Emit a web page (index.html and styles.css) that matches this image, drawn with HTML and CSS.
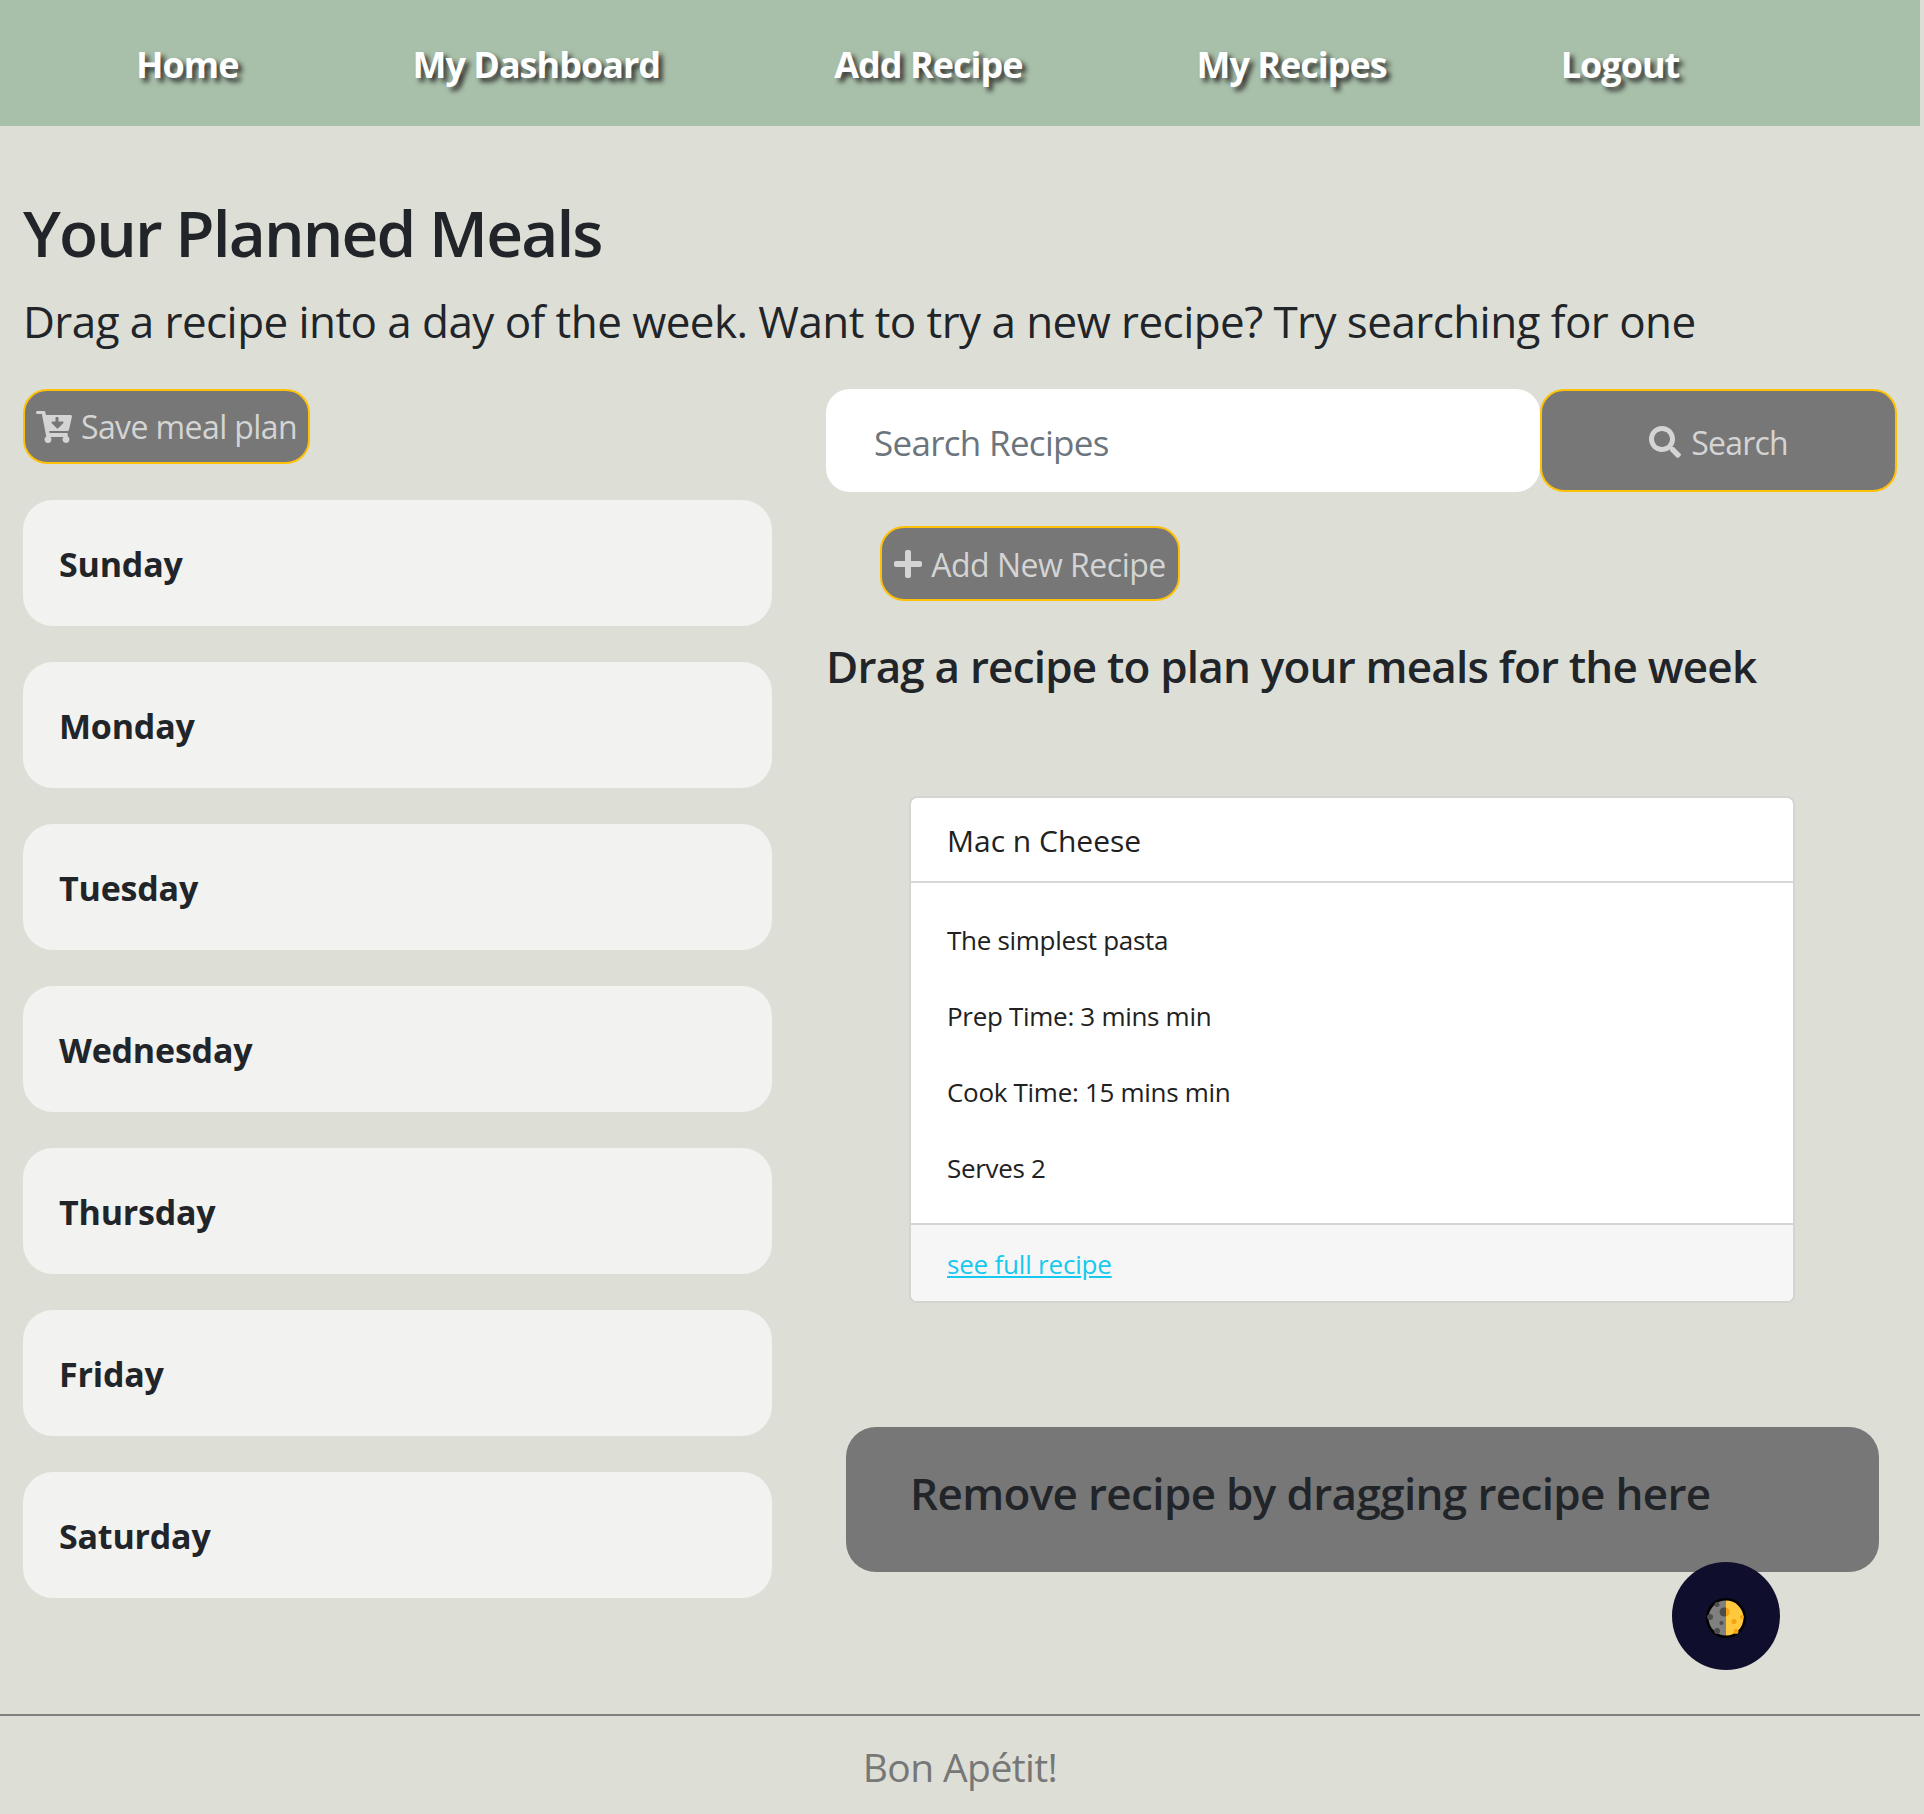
FILE: index.html
```html
<!DOCTYPE html>
<html>
<head>
	<title>Meal Planner</title>
	<link rel="stylesheet" href="styles.css">
</head>
<body>
	<nav class="topnav">
		<a href="#">Home</a>
		<a href="#">My Dashboard</a>
		<a href="#">Add Recipe</a>
		<a href="#">My Recipes</a>
		<a href="#">Logout</a>
	</nav>
	<main class="page">
		<h1 class="page-title">Your Planned Meals</h1>
		<p class="lead">Drag a recipe into a day of the week. Want to try a new recipe? Try searching for one</p>
		<div class="planner">
			<section class="week">
				<button type="button" class="btn btn-save">
					<svg class="icon icon-cart" viewBox="0 0 576 512"><path fill="currentColor" d="M504.7 320H211.3l6.5 32h268.4c15.4 0 26.8 14.3 23.4 29.3l-5.5 24.3c18.7 9.1 31.6 28.2 31.6 50.4 0 31.2-25.5 56.4-56.8 56-29.8-.4-54.4-24.6-55.2-54.4-.4-16.3 6.1-31 16.8-41.6H231.2c10.4 10.2 16.8 24.3 16.8 40 0 31.8-26.5 57.4-58.7 56-28.6-1.2-51.8-24.3-53.3-52.9-1.2-22.1 10.4-41.5 28-51.6L94 48H24C10.7 48 0 37.300 0 24S10.700 0 24 0h102.500c11.400 0 21.200 8 23.500 19.200L159.200 64H552c15.400 0 26.800 14.300 23.400 29.300l-47.300 208c-2.500 10.900-12.200 18.700-23.400 18.700zM408 168h-48v-56c0-8.800-7.200-16-16-16h-16c-8.800 0-16 7.200-16 16v56h-48c-14.300 0-21.400 17.200-11.300 27.300l80 80c6.200 6.200 16.400 6.200 22.600 0l80-80c10.100-10.100 3-27.300-11.300-27.300z"/></svg>
					Save meal plan
				</button>
				<div class="day">Sunday</div>
				<div class="day">Monday</div>
				<div class="day">Tuesday</div>
				<div class="day">Wednesday</div>
				<div class="day">Thursday</div>
				<div class="day">Friday</div>
				<div class="day">Saturday</div>
			</section>
			<section class="recipes">
				<form class="search">
					<input type="text" class="search-input" placeholder="Search Recipes">
					<button type="button" class="btn btn-search">
						<svg class="icon icon-search" viewBox="0 0 512 512"><path fill="currentColor" d="M505 442.700L405.300 343c-4.500-4.500-10.600-7-17-7H372c27.600-35.300 44-79.700 44-128C416 93.100 322.900 0 208 0S0 93.100 0 208s93.100 208 208 208c48.300 0 92.700-16.400 128-44v16.300c0 6.400 2.500 12.500 7 17l99.700 99.700c9.400 9.400 24.600 9.400 33.900 0l28.300-28.300c9.400-9.400 9.400-24.600.1-34zM208 336c-70.700 0-128-57.200-128-128 0-70.700 57.200-128 128-128 70.700 0 128 57.200 128 128 0 70.700-57.200 128-128 128z"/></svg>
						Search
					</button>
				</form>
				<button type="button" class="btn btn-add">
					<svg class="icon icon-plus" viewBox="0 0 448 512"><path fill="currentColor" d="M416 208H272V64c0-17.670-14.330-32-32-32h-32c-17.670 0-32 14.330-32 32v144H32c-17.670 0-32 14.330-32 32v32c0 17.670 14.330 32 32 32h144v144c0 17.670 14.330 32 32 32h32c17.670 0 32-14.330 32-32V304h144c17.670 0 32-14.330 32-32v-32c0-17.670-14.330-32-32-32z"/></svg>
					Add New Recipe
				</button>
				<h2 class="recipes-title">Drag a recipe to plan your meals for the week</h2>
				<div class="card">
					<div class="card-header">Mac n Cheese</div>
					<div class="card-body">
						<p>The simplest pasta</p>
						<p>Prep Time: 3 mins min</p>
						<p>Cook Time: 15 mins min</p>
						<p>Serves 2</p>
					</div>
					<div class="card-footer"><a href="#">see full recipe</a></div>
				</div>
				<div class="trash">Remove recipe by dragging recipe here</div>
			</section>
		</div>
		<button type="button" class="theme-toggle" aria-label="Toggle theme">
			<svg viewBox="0 0 40 40" width="40" height="40">
				<circle cx="20" cy="20" r="20" fill="#000"/>
				<path d="M20 2.500a17.500 17.500 0 0 0 0 35z" fill="#808080"/>
				<path d="M20 2.500a17.500 17.500 0 0 1 0 35z" fill="#ffc83d"/>
				<circle cx="18" cy="14" r="4.500" fill="#4d4d4d"/>
				<path d="M20 9.600a4.500 4.500 0 0 1 0 8.800z" fill="#f2a30f"/>
				<circle cx="11" cy="6.500" r="2.500" fill="#4d4d4d"/>
				<circle cx="4" cy="19" r="3" fill="#4d4d4d"/>
				<circle cx="15.500" cy="25" r="2" fill="#4d4d4d"/>
				<circle cx="11" cy="33" r="3" fill="#4d4d4d"/>
				<circle cx="28" cy="23.500" r="2.500" fill="#f2a30f"/>
				<circle cx="36" cy="19" r="2" fill="#f2a30f"/>
				<circle cx="30" cy="33.500" r="2.500" fill="#f2a30f"/>
			</svg>
		</button>
	</main>
	<footer class="footer">Bon Apétit!</footer>
</body>
</html>
```

FILE: styles.css
```css
html{
	background-color: #dddfd7;
}
body{
	margin: 0;
	width: 1920px;
	font-family: "Open Sans", "Noto Sans", sans-serif;
	color: #212529;
	background-color: #dddfd7;
}
.topnav{
	height: 126px;
	background-color: #a8c0a9;
	display: flex;
	align-items: center;
	gap: 174px;
	padding: 3px 0 0 136px;
	box-sizing: border-box;
}
.topnav a{
	color: white;
	font-size: 36px;
	font-weight: 700;
	letter-spacing: -1px;
	text-decoration: none;
	text-shadow: 4px 4px 5px #333;
}
.page{
	position: relative;
	padding: 69px 23px 0;
	height: 1588px;
	box-sizing: border-box;
}
.page-title{
	margin: 0;
	font-size: 64px;
	font-weight: 550;
	line-height: 76px;
	letter-spacing: -1.9px;
}
.lead{
	margin: 20px 0 0;
	font-size: 44px;
	font-weight: 400;
	line-height: 60px;
	letter-spacing: -0.57px;
}
.planner{
	display: flex;
	gap: 54px;
	margin-top: 38px;
}
.week{
	width: 749px;
	flex: none;
	display: flex;
	flex-direction: column;
	align-items: flex-start;
	gap: 36px;
}
.day{
	width: 100%;
	height: 126px;
	box-sizing: border-box;
	padding: 42px 36px 0;
	border-radius: 30px;
	background-color: #f2f2f0;
	font-size: 34px;
	font-weight: 700;
	line-height: 44px;
	letter-spacing: -0.2px;
}
.btn{
	display: flex;
	align-items: center;
	justify-content: center;
	box-sizing: border-box;
	background-color: #777;
	border: 2px solid #ffc107;
	border-radius: 24px;
	color: #d4d4d4;
	font-family: inherit;
	font-size: 32px;
	font-weight: 400;
	letter-spacing: -0.6px;
}
.icon{
	flex: none;
}
.btn-save{
	width: 287px;
	height: 75px;
	gap: 9px;
}
.icon-cart{
	width: 36px;
	height: 32px;
}
.recipes{
	flex: 1;
	display: flex;
	flex-direction: column;
	align-items: flex-start;
}
.search{
	display: flex;
	width: 1071px;
	height: 103px;
}
.search-input{
	width: 714px;
	box-sizing: border-box;
	border: none;
	outline: none;
	border-radius: 24px;
	padding: 4px 48px 0;
	background-color: white;
	font-family: inherit;
	font-size: 35px;
	font-weight: 400;
	letter-spacing: -0.7px;
}
.search-input::placeholder{
	color: #6c757d;
	opacity: 1;
}
.btn-search{
	width: 357px;
	height: 103px;
	gap: 10px;
	padding-top: 4px;
	letter-spacing: -0.8px;
}
.icon-search{
	width: 32px;
	height: 32px;
}
.btn-add{
	margin: 34px 0 0 54px;
	width: 300px;
	height: 75px;
	gap: 9px;
	padding-top: 2px;
	letter-spacing: -0.5px;
}
.icon-plus{
	width: 28px;
	height: 32px;
}
.recipes-title{
	margin: 35px 0 0;
	font-size: 44px;
	font-weight: 600;
	line-height: 60px;
	letter-spacing: -0.8px;
}
.card{
	margin: 100px 0 0 83px;
	width: 886px;
	height: 507px;
	box-sizing: border-box;
	display: flex;
	flex-direction: column;
	background-color: white;
	border: 2px solid #d4d4d2;
	border-radius: 8px;
	color: #212121;
}
.card-header{
	flex: none;
	height: 85px;
	box-sizing: border-box;
	padding: 1px 36px 0;
	display: flex;
	align-items: center;
	font-size: 30px;
	font-weight: 400;
	border-bottom: 2px solid #d8d8d8;
}
.card-body{
	flex: 1;
	padding: 38px 36px 0;
	font-size: 26px;
	font-weight: 400;
	letter-spacing: -0.3px;
}
.card-body p{
	margin: 0 0 38px;
	line-height: 38px;
}
.card-body p:last-child{
	margin-bottom: 0;
}
.card-footer{
	flex: none;
	height: 78px;
	box-sizing: border-box;
	padding: 2px 36px 0;
	display: flex;
	align-items: center;
	background-color: #f6f6f6;
	border-top: 2px solid #d4d4d4;
	border-radius: 0 0 6px 6px;
	font-size: 26px;
	font-weight: 400;
	letter-spacing: -0.2px;
}
.card-footer a{
	color: #17c9ee;
}
.trash{
	margin: 124px 0 0 20px;
	width: 1033px;
	height: 145px;
	box-sizing: border-box;
	padding: 36px 64px 0;
	border-radius: 30px;
	background-color: #777;
	font-size: 44px;
	font-weight: 600;
	line-height: 60px;
	letter-spacing: -0.65px;
}
.theme-toggle{
	position: absolute;
	left: 1672px;
	top: 1436px;
	width: 108px;
	height: 108px;
	border: none;
	border-radius: 50%;
	background-color: #0f0f2d;
	display: flex;
	align-items: center;
	justify-content: center;
	padding: 4px 0 0;
}
.footer{
	height: 100px;
	border-top: 2px solid #808080;
	box-sizing: border-box;
	display: flex;
	align-items: center;
	justify-content: center;
	padding-top: 3px;
	color: #777;
	font-size: 39px;
	font-weight: 400;
	letter-spacing: -0.6px;
}
```
